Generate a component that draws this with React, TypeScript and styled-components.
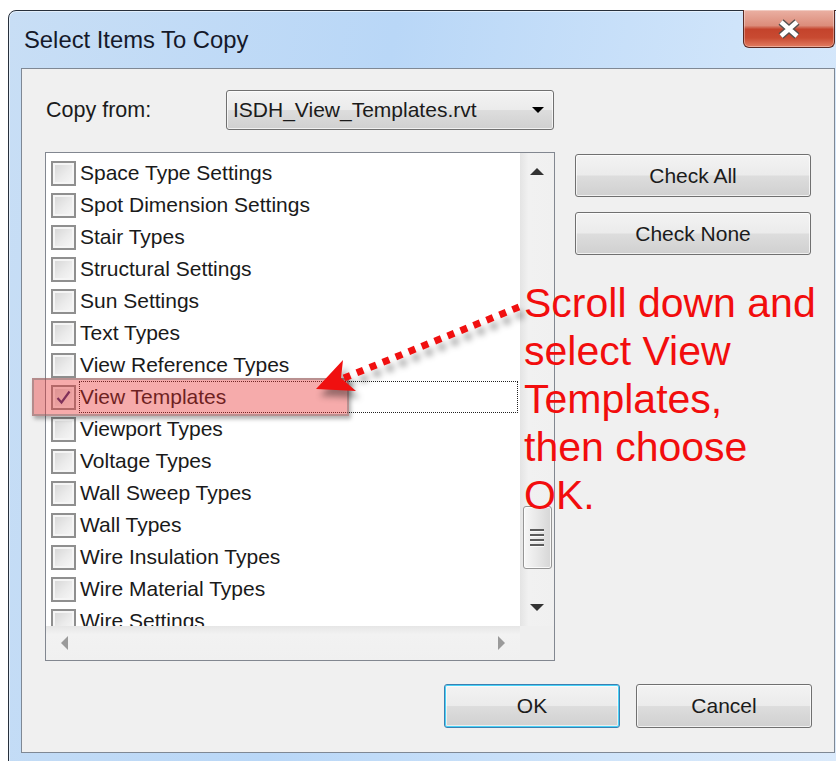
import React from "react";
import styled, { createGlobalStyle, css } from "styled-components";

const GlobalStyle = createGlobalStyle`
  html, body {
    margin: 0;
    background: #ffffff;
    overflow: hidden;
  }
  body {
    font-family: "Liberation Sans", Arial, sans-serif;
  }
`;

const Stage = styled.div`
  width: 836px;
  height: 761px;
  box-sizing: border-box;
  padding: 10px 0 0 8px;
  overflow: hidden;
`;

const Window = styled.div`
  width: 840px;
  box-sizing: border-box;
  padding: 0 12px 24px;
  border: 1px solid #27303c;
  border-radius: 8px 8px 0 0;
  background: linear-gradient(100deg, #c8def5 0%, #b9d7f7 40%, #cfe4fa 75%, #dbeafb 100%);
  box-shadow: inset 0 0 0 1px rgba(255, 255, 255, 0.5);
`;

const TitleBar = styled.div`
  height: 57px;
  display: flex;
  justify-content: space-between;
  align-items: flex-start;
`;

const Title = styled.div`
  align-self: center;
  padding-left: 3px;
  font-size: 23.8px;
  color: #15192a;
`;

const CloseButton = styled.div`
  margin-top: -1px;
  width: 92px;
  height: 38px;
  box-sizing: border-box;
  border: 1px solid #5a2a23;
  border-top: none;
  border-radius: 0 0 6px 6px;
  background: linear-gradient(
    #eab0a3 0%,
    #dc8d7b 42%,
    #c4432c 52%,
    #c84a31 75%,
    #e27c60 100%
  );
  box-shadow: inset 0 0 0 1px rgba(255, 255, 255, 0.35);
  display: flex;
  align-items: center;
  justify-content: center;
`;

const Client = styled.div`
  position: relative;
  height: 685px;
  box-sizing: border-box;
  border: 1px solid #7f8894;
  background: #f0f0f0;
  padding: 21px 22px 0 23px;
  display: flex;
  flex-direction: column;
`;

const SourceRow = styled.div`
  display: flex;
  align-items: center;
  height: 40px;
`;

const FieldLabel = styled.div`
  flex: 0 0 180px;
  padding-left: 1px;
  font-size: 21.5px;
  color: #1b1b1b;
`;

const buttonFace = css`
  box-sizing: border-box;
  border: 1px solid #707070;
  border-radius: 3px;
  background: linear-gradient(#f3f3f3 0%, #ebebeb 49%, #dddddd 51%, #d0d0d0 100%);
  box-shadow: inset 0 0 0 1px rgba(255, 255, 255, 0.7);
  font-family: "Liberation Sans", Arial, sans-serif;
  font-size: 21px;
  color: #1b1b1b;
`;

const Combo = styled.div`
  ${buttonFace};
  width: 328px;
  height: 40px;
  display: flex;
  align-items: center;
  justify-content: space-between;
  padding: 0 9px 0 6px;
`;

const Triangle = styled.span<{ $dir: "up" | "down" | "left" | "right"; $tone?: string }>`
  width: 0;
  height: 0;
  border-style: solid;
  border-color: transparent;
  ${({ $dir, $tone = "#333" }) =>
    $dir === "up"
      ? `border-width: 0 7px 7px; border-bottom-color: ${$tone};`
      : $dir === "down"
      ? `border-width: 7px 7px 0; border-top-color: ${$tone};`
      : $dir === "left"
      ? `border-width: 7px 7px 7px 0; border-right-color: ${$tone};`
      : `border-width: 7px 0 7px 7px; border-left-color: ${$tone};`}
`;

const ComboArrow = styled.span`
  width: 0;
  height: 0;
  border-style: solid;
  border-color: #000 transparent transparent;
  border-width: 6px 6px 0;
`;

const Body = styled.div`
  display: flex;
  gap: 20px;
  margin-top: 22px;
`;

const ListBox = styled.div`
  width: 510px;
  height: 509px;
  box-sizing: border-box;
  border: 1px solid #828790;
  background: #ffffff;
  display: flex;
  flex-direction: column;
`;

const ListViewport = styled.div`
  flex: 1;
  display: flex;
  overflow: hidden;
`;

const Rows = styled.div`
  flex: 1;
  padding-top: 4px;
  display: flex;
  flex-direction: column;
  overflow: hidden;
`;

const Row = styled.div`
  flex-shrink: 0;
  height: 32px;
  padding-left: 5px;
  display: flex;
  align-items: center;
`;

const CheckBox = styled.span`
  flex-shrink: 0;
  width: 25px;
  height: 25px;
  box-sizing: border-box;
  border: 2px solid #8f8f8f;
  background: linear-gradient(135deg, #d4d4d4 0%, #ebebeb 55%, #f8f8f8 100%);
  box-shadow: inset 0 0 0 2px #f5f5f5;
  display: flex;
  align-items: center;
  justify-content: center;
`;

const ItemLabel = styled.span<{ $focus?: boolean }>`
  flex: 1;
  height: 32px;
  box-sizing: border-box;
  margin: 0 2px 0 3px;
  border: 1px ${({ $focus }) => ($focus ? "dotted #222" : "solid transparent")};
  line-height: 30px;
  font-size: 21px;
  color: #1a1a1a;
  white-space: nowrap;
`;

const VScroll = styled.div`
  width: 34px;
  display: flex;
  flex-direction: column;
  background: linear-gradient(90deg, #e4e4e4 0%, #f1f1f1 25%, #f0f0f0 100%);
`;

const ScrollButton = styled.div<{ $w?: number }>`
  flex: 0 0 ${({ $w = 37 }) => $w}px;
  display: flex;
  align-items: center;
  justify-content: center;
`;

const Track = styled.div`
  flex: 1;
  display: flex;
  flex-direction: column;
  justify-content: flex-end;
  align-items: center;
`;

const Thumb = styled.div`
  width: 29px;
  height: 63px;
  margin-bottom: 20px;
  box-sizing: border-box;
  border: 1px solid #959595;
  border-radius: 3px;
  background: linear-gradient(90deg, #f7f7f7 0%, #e9e9e9 45%, #d6d6d6 100%);
  box-shadow: inset 0 0 0 1px rgba(255, 255, 255, 0.8);
  display: flex;
  flex-direction: column;
  align-items: center;
  justify-content: center;
  gap: 2px;
`;

const Grip = styled.span`
  width: 14px;
  height: 2px;
  background: #5b5b5b;
  border-bottom: 1px solid #fafafa;
`;

const HScroll = styled.div`
  height: 34px;
  display: flex;
  background: linear-gradient(#e6e6e6 0%, #f2f2f2 25%, #f0f0f0 100%);
`;

const Corner = styled.div`
  width: 34px;
  background: #efefef;
`;

const SideButtons = styled.div`
  display: flex;
  flex-direction: column;
  gap: 15px;
  padding-top: 2px;
`;

const PushButton = styled.div<{ $w?: number; $h?: number; $default?: boolean }>`
  ${buttonFace};
  width: ${({ $w = 236 }) => $w}px;
  height: ${({ $h = 43 }) => $h}px;
  display: flex;
  align-items: center;
  justify-content: center;
  ${({ $default }) =>
    $default &&
    css`
      border-color: #3c7fb1;
      box-shadow: inset 0 0 0 1px #48d2f7, inset 0 0 0 2px rgba(255, 255, 255, 0.6);
    `}
`;

const Footer = styled.div`
  margin-top: 23px;
  display: flex;
  justify-content: flex-end;
  gap: 16px;
`;

const Highlight = styled.div`
  position: absolute;
  left: 10px;
  top: 309px;
  width: 317px;
  height: 38px;
  box-sizing: border-box;
  border: 2px solid rgba(110, 110, 110, 0.45);
  background: rgba(232, 45, 45, 0.4);
  box-shadow: 2px 3px 4px rgba(0, 0, 0, 0.3);
  pointer-events: none;
`;

const Pointer = styled.svg`
  position: absolute;
  left: 0;
  top: 0;
  width: 811px;
  height: 683px;
  pointer-events: none;
  overflow: visible;
`;

const Callout = styled.div`
  position: absolute;
  left: 502px;
  top: 210px;
  font-size: 41px;
  line-height: 48px;
  color: #f20d0d;
  white-space: pre;
`;

const items = [
  "Space Type Settings",
  "Spot Dimension Settings",
  "Stair Types",
  "Structural Settings",
  "Sun Settings",
  "Text Types",
  "View Reference Types",
  "View Templates",
  "Viewport Types",
  "Voltage Types",
  "Wall Sweep Types",
  "Wall Types",
  "Wire Insulation Types",
  "Wire Material Types",
  "Wire Settings",
];

const selected = "View Templates";

const App: React.FC = () => {
  return (
    <Stage>
      <GlobalStyle />
      <Window>
        <TitleBar>
          <Title>Select Items To Copy</Title>
          <CloseButton>
            <svg width="26" height="20" viewBox="0 0 26 20">
              <path d="M5 3 L21 17 M21 3 L5 17" stroke="#55504e" strokeWidth="7.5" />
              <path d="M5 3 L21 17 M21 3 L5 17" stroke="#ffffff" strokeWidth="4.5" />
            </svg>
          </CloseButton>
        </TitleBar>

        <Client>
          <SourceRow>
            <FieldLabel>Copy from:</FieldLabel>
            <Combo>
              <span>ISDH_View_Templates.rvt</span>
              <ComboArrow />
            </Combo>
          </SourceRow>

          <Body>
            <ListBox>
              <ListViewport>
                <Rows>
                  {items.map((name) => (
                    <Row key={name}>
                      <CheckBox>
                        {name === selected && (
                          <svg width="17" height="17" viewBox="0 0 17 17">
                            <path
                              d="M2.5 9 L6.5 13.5 L14.5 2.5"
                              fill="none"
                              stroke="#3a3478"
                              strokeWidth="2.2"
                            />
                          </svg>
                        )}
                      </CheckBox>
                      <ItemLabel $focus={name === selected}>{name}</ItemLabel>
                    </Row>
                  ))}
                </Rows>
                <VScroll>
                  <ScrollButton>
                    <Triangle $dir="up" />
                  </ScrollButton>
                  <Track>
                    <Thumb>
                      <Grip />
                      <Grip />
                      <Grip />
                      <Grip />
                    </Thumb>
                  </Track>
                  <ScrollButton>
                    <Triangle $dir="down" />
                  </ScrollButton>
                </VScroll>
              </ListViewport>
              <HScroll>
                <ScrollButton>
                  <Triangle $dir="left" $tone="#9a9a9a" />
                </ScrollButton>
                <Track />
                <ScrollButton>
                  <Triangle $dir="right" $tone="#9a9a9a" />
                </ScrollButton>
                <Corner />
              </HScroll>
            </ListBox>

            <SideButtons>
              <PushButton>Check All</PushButton>
              <PushButton>Check None</PushButton>
            </SideButtons>
          </Body>

          <Footer>
            <PushButton $w={176} $h={44} $default>
              OK
            </PushButton>
            <PushButton $w={176} $h={44}>
              Cancel
            </PushButton>
          </Footer>

          <Highlight />

          <Pointer viewBox="0 0 811 683">
            <g style={{ filter: "drop-shadow(4px 7px 3px rgba(0,0,0,0.38))" }}>
              <line
                x1="497"
                y1="238"
                x2="322"
                y2="309"
                stroke="#f01010"
                strokeWidth="7"
                strokeDasharray="7 7"
              />
              <polygon points="294,320 321,291 319,309 334,322" fill="#f01010" />
            </g>
          </Pointer>

          <Callout>
            {"Scroll down and\nselect View\nTemplates,\nthen choose\nOK."}
          </Callout>
        </Client>
      </Window>
    </Stage>
  );
};

export default App;
